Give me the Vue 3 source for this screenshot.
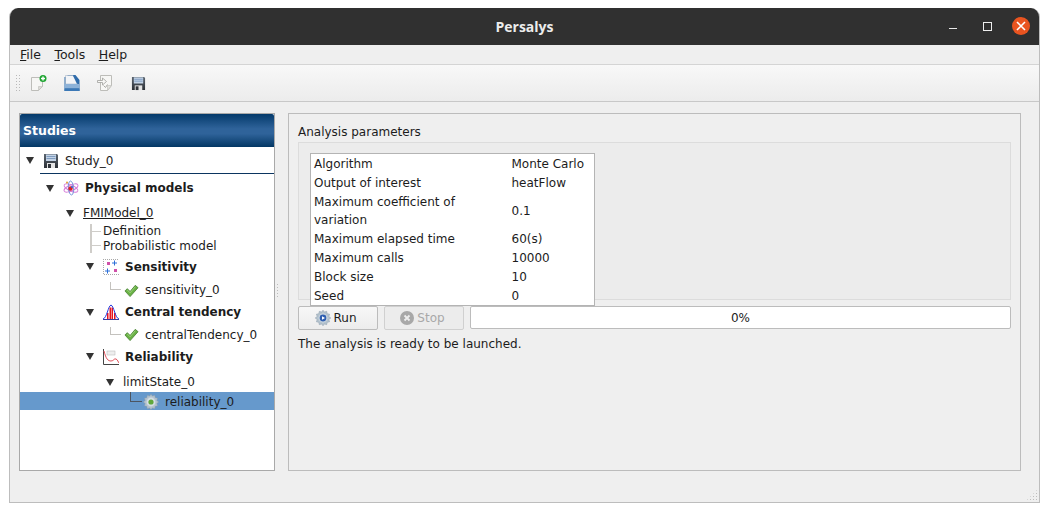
<template>
  <div class="page">
    <svg class="defs" width="0" height="0">
      <defs>
        <linearGradient id="floppyBody" x1="0" y1="0" x2="0" y2="1">
          <stop offset="0" stop-color="#5b6570" />
          <stop offset="1" stop-color="#2c3036" />
        </linearGradient>
        <symbol id="i-save" viewBox="0 0 16 16">
          <path d="M1 1h13l1 1v13H1z" fill="url(#floppyBody)" />
          <rect x="3" y="1.500" width="10" height="6.500" fill="#c3d3e6" />
          <path d="M3.500 3.500h9M3.500 5.500h9" stroke="#7f9cc0" stroke-width="1" />
          <rect x="4" y="10" width="8" height="5" fill="#e4e4e4" />
          <rect x="5" y="11" width="3" height="4" fill="#30343a" />
        </symbol>
        <symbol id="i-check" viewBox="0 0 16 16">
          <path d="M1 8.500l2.500-2.500 3 3 5.500-6.500 3 2.500-8.500 9.500z" fill="#6ab245" stroke="#3f7a2a" stroke-width=".8" />
          <path d="M3.500 7.500l3 3 5.500-6.500" fill="none" stroke="#a5d88a" stroke-width=".8" />
        </symbol>
        <symbol id="i-gear" viewBox="0 0 16 16">
          <path d="M8 .2l1.400 1.900 2.300-.8.500 2.400 2.400.5-.8 2.300L15.800 8l-2 1.500.8 2.300-2.400.5-.5 2.400-2.300-.8L8 15.800l-1.400-1.900-2.300.8-.5-2.400-2.400-.5.8-2.300L.2 8l2-1.500-.8-2.300 2.400-.5.5-2.400 2.300.8z" fill="#b4c3ce" stroke="#8a9baa" stroke-width=".5" />
          <circle cx="8" cy="8" r="4.400" fill="#d5dee4" />
        </symbol>
      </defs>
    </svg>

    <div class="window">
      <header class="titlebar">
        <span class="title">Persalys</span>
        <div class="wm">
          <span class="wm-min"></span>
          <span class="wm-max"></span>
          <span class="wm-close">
            <svg width="12" height="12" viewBox="0 0 12 12"><path d="M2 2l8 8M10 2l-8 8" stroke="#fff" stroke-width="1.600" /></svg>
          </span>
        </div>
      </header>

      <nav class="menubar">
        <span><u>F</u>ile</span>
        <span><u>T</u>ools</span>
        <span><u>H</u>elp</span>
      </nav>

      <div class="toolbar">
        <span class="grip"></span>
        <svg class="tool" viewBox="0 0 16 16">
          <path d="M.5 2.500h11v9l-4 4h-7z" fill="#f6f6f4" stroke="#bdbdb9" />
          <path d="M7.500 15.500v-4h4z" fill="#dcdcd8" stroke="#bdbdb9" stroke-width=".6" />
          <circle cx="12" cy="3.500" r="3.500" fill="#1fa532" />
          <path d="M12 1.500v4M10 3.500h4" stroke="#fff" stroke-width="1.400" />
        </svg>
        <svg class="tool" viewBox="0 0 16 16">
          <path d="M.5 16V2h3V0h8l4 5v11z" fill="#2f6cab" />
          <path d="M1.500 9V.5h7.500L13.500 7v2z" fill="#f2f4f7" stroke="#9aaabc" stroke-width=".5" />
          <path d="M9 .5l6 4.500v3l-2 1z" fill="#2f6cab" />
          <path d="M.5 9h15v4.500H.5z" fill="#8db2d8" />
          <path d="M.5 13.500h15V16H.5z" fill="#3b78b6" />
        </svg>
        <svg class="tool" viewBox="0 0 16 16">
          <path d="M3.500 .5h11v10l-4 5h-7z" fill="#f7f7f5" stroke="#bdbdb9" />
          <path d="M10.500 15.500v-5h4z" fill="#e2e2de" stroke="#bdbdb9" stroke-width=".6" />
          <path d="M.5 5.500h5V3l4 3.500-4 3.500V7.500h-5z" fill="#f7f7f5" stroke="#a0a09c" stroke-width=".8" />
          <path d="M6.500 10.500l2 2 2-3" fill="none" stroke="#a9a9a5" />
        </svg>
        <svg class="tool tool-save" viewBox="0 0 16 16"><use href="#i-save" /></svg>
      </div>

      <main class="content">
        <aside class="studies">
          <div class="studies-head">Studies</div>
          <div class="tree">
            <div
              v-for="row in rows"
              :key="row.label"
              class="row"
              :class="{ selected: row.selected, 'row-study': row.study }"
              :style="{ height: row.h + 'px', paddingLeft: row.x + 'px', paddingTop: (row.pt || 0) + 'px' }"
            >
              <span v-if="row.arrow" class="arrow"></span>

              <span v-if="row.leaf" class="branch"><i></i></span>
              <span v-if="row.corner" class="corner" :class="{ 'corner-sel': row.selected }"></span>

              <svg v-if="row.icon === 'save'" class="ico" viewBox="0 0 16 16"><use href="#i-save" /></svg>
              <svg v-else-if="row.icon === 'atom'" class="ico" viewBox="0 0 16 16">
                <g fill="none" stroke-width=".9">
                  <ellipse cx="8" cy="8" rx="7.500" ry="3" stroke="#d57ad8" transform="rotate(25 8 8)" />
                  <ellipse cx="8" cy="8" rx="7.500" ry="3" stroke="#d57ad8" transform="rotate(-25 8 8)" />
                  <ellipse cx="8" cy="8" rx="7" ry="2.600" stroke="#6c8fd8" transform="rotate(85 8 8)" />
                </g>
                <circle cx="7.500" cy="8.500" r="2.200" fill="#d8232a" />
                <circle cx="9" cy="7" r="1.100" fill="#3a5fcd" />
                <circle cx="4" cy="2.500" r="1" fill="#e0a030" />
              </svg>
              <svg v-else-if="row.icon === 'sens'" class="ico" viewBox="0 0 16 16">
                <path d="M.5 0v15.500H16" fill="none" stroke="#a8a8a8" stroke-dasharray="1 1" />
                <path d="M2 .5h14" stroke="#a8a8a8" stroke-dasharray="1 1" />
                <path d="M4 3h3v3H4zM11 10h3v3h-3z" fill="#c8329a" opacity=".85" />
                <path d="M11.500 1.500v5M9 4h5M4.500 9.500v5M2 12h5" stroke="#2a6fd8" stroke-width="1" />
              </svg>
              <svg v-else-if="row.icon === 'central'" class="ico" viewBox="0 0 16 16">
                <path d="M4 15V9h1.500v6zM6.500 15V3.500H8V15zM8.500 15V3.500H10V15zM11 15V9h1.500v6z" fill="#e8131f" />
                <path d="M0 15.500h16" stroke="#3a3a9a" />
                <path d="M0 15C4 14 5 2 8 1c3 1 4 13 8 14" fill="none" stroke="#2038e0" stroke-width="1" />
              </svg>
              <svg v-else-if="row.icon === 'rel'" class="ico" viewBox="0 0 16 16">
                <path d="M.5 0v15.500H16" fill="none" stroke="#444" />
                <path d="M1 2C3 10 5 12 8 12s3-3 5-2 2 3 3 4" fill="none" stroke="#e0505a" />
                <rect x="4" y="2" width="8" height="4" fill="#eee" stroke="#b5b5b5" stroke-width=".5" />
              </svg>
              <svg v-else-if="row.icon === 'check'" class="ico ico-check" viewBox="0 0 16 16"><use href="#i-check" /></svg>
              <svg v-else-if="row.icon === 'gear'" class="ico" viewBox="0 0 16 16">
                <use href="#i-gear" />
                <circle cx="8" cy="8" r="2.600" fill="#5fa83c" />
              </svg>

              <span class="label" :class="{ bold: row.bold, under: row.under }">{{ row.label }}</span>
            </div>
          </div>
        </aside>

        <div class="splitter"></div>

        <section class="panel">
          <div class="panel-title">Analysis parameters</div>
          <div class="group">
            <table class="params">
              <tbody>
                <tr v-for="p in params" :key="p[0]">
                  <td class="k">{{ p[0] }}</td>
                  <td class="v">{{ p[1] }}</td>
                </tr>
              </tbody>
            </table>
          </div>
          <div class="actions">
            <button class="btn">
              <svg class="btn-ico" viewBox="0 0 16 16">
                <use href="#i-gear" />
                <circle cx="8" cy="8" r="3.400" fill="#2f5fb0" />
                <path d="M7 6.200l3 1.800-3 1.800z" fill="#fff" />
              </svg>
              Run
            </button>
            <button class="btn btn-off">
              <svg class="btn-ico" viewBox="0 0 16 16">
                <circle cx="8" cy="8" r="7" fill="#a8a8a8" />
                <path d="M5.500 5.500l5 5M10.500 5.500l-5 5" stroke="#eee" stroke-width="1.800" />
              </svg>
              Stop
            </button>
            <div class="progress">0%</div>
          </div>
          <p class="status">The analysis is ready to be launched.</p>
        </section>
      </main>
      <span class="resize"></span>
    </div>
  </div>
</template>

<script setup>
const rows = [
  { label: 'Study_0', x: 6, h: 27, arrow: true, icon: 'save', study: true },
  { label: 'Physical models', x: 26, h: 28, arrow: true, icon: 'atom', bold: true },
  { label: 'FMIModel_0', x: 46, h: 22, arrow: true, under: true },
  { label: 'Definition', x: 70, h: 14, leaf: true },
  { label: 'Probabilistic model', x: 70, h: 15, leaf: true },
  { label: 'Sensitivity', x: 66, h: 27, arrow: true, icon: 'sens', bold: true },
  { label: 'sensitivity_0', x: 90, h: 20, corner: true, icon: 'check' },
  { label: 'Central tendency', x: 66, h: 24, arrow: true, icon: 'central', bold: true },
  { label: 'centralTendency_0', x: 90, h: 21, corner: true, icon: 'check' },
  { label: 'Reliability', x: 66, h: 23, arrow: true, icon: 'rel', bold: true },
  { label: 'limitState_0', x: 86, h: 24, pt: 4, arrow: true },
  { label: 'reliability_0', x: 110, h: 18, pt: 2, corner: true, icon: 'gear', selected: true }
]

const params = [
  ['Algorithm', 'Monte Carlo'],
  ['Output of interest', 'heatFlow'],
  ['Maximum coefficient of variation', '0.1'],
  ['Maximum elapsed time', '60(s)'],
  ['Maximum calls', '10000'],
  ['Block size', '10'],
  ['Seed', '0']
]
</script>

<style>
html,
body {
  margin: 0;
  background: #fff;
}
</style>

<style scoped>
.page {
  width: 1049px;
  height: 512px;
  box-sizing: border-box;
  padding: 8px 9px 9px;
  overflow: hidden;
  font-family: "DejaVu Sans", sans-serif;
  font-size: 12px;
  color: #1c1c1c;
}

.defs {
  position: absolute;
}

.window {
  position: relative;
  height: 495px;
  box-sizing: border-box;
  display: flex;
  flex-direction: column;
  background: #efefef;
  border: 1px solid #bdbdbd;
  border-top: none;
  border-radius: 9px 9px 0 0;
  overflow: hidden;
}

/* title bar */
.titlebar {
  height: 37px;
  flex-shrink: 0;
  background: #303030;
  display: flex;
  align-items: center;
  justify-content: center;
  position: relative;
}

.title {
  color: #ececec;
  font-family: "Open Sans", sans-serif;
  font-weight: 700;
  font-size: 14px;
}

.wm {
  position: absolute;
  right: 9px;
  top: 9px;
  display: flex;
  align-items: center;
  gap: 20px;
}

.wm-min {
  width: 8px;
  height: 1px;
  background: #e8e8e8;
  margin-top: 4px;
  margin-right: 6px;
}

.wm-max {
  width: 7px;
  height: 7px;
  border: 1px solid #eee;
}

.wm-close {
  width: 18px;
  height: 18px;
  border-radius: 50%;
  background: #e95420;
  display: flex;
  align-items: center;
  justify-content: center;
}

/* menu bar */
.menubar {
  height: 19px;
  flex-shrink: 0;
  display: flex;
  align-items: center;
  gap: 13.5px;
  padding-left: 10px;
  border-bottom: 1px solid #d4d4d4;
  font-size: 12.5px;
}

/* toolbar */
.toolbar {
  height: 37px;
  flex-shrink: 0;
  box-sizing: border-box;
  display: flex;
  align-items: center;
  padding-left: 5px;
  background: linear-gradient(#f8f8f8, #ececec);
  border-bottom: 1px solid #c8c8c8;
}

.grip {
  width: 5px;
  height: 18px;
  margin-right: 11px;
  background-image: radial-gradient(circle, #b9b9b9 0.7px, transparent 0.8px);
  background-size: 3px 3px;
}

.tool {
  width: 16px;
  height: 16px;
  margin-right: 17px;
}

.tool-save {
  margin-left: 1px;
  width: 15px;
  height: 15px;
}

/* main area */
.content {
  flex: 1;
  display: flex;
  padding: 11px 18px 31px 9px;
  min-height: 0;
}

.studies {
  width: 256px;
  box-sizing: border-box;
  background: #fff;
  border: 1px solid #a9a9a9;
  display: flex;
  flex-direction: column;
  flex-shrink: 0;
}

.studies-head {
  height: 33px;
  flex-shrink: 0;
  box-sizing: border-box;
  padding-left: 3px;
  display: flex;
  align-items: center;
  color: #fff;
  font-weight: 700;
  font-size: 12.5px;
  background: linear-gradient(#043a6b, #2f639a 45%, #2f639a 60%, #033764);
  border-radius: 2px 2px 0 0;
}

.row {
  display: flex;
  align-items: center;
  box-sizing: border-box;
  white-space: nowrap;
}

.row-study {
  position: relative;
}

.row-study::after {
  content: "";
  position: absolute;
  left: 20px;
  right: 0;
  bottom: 0;
  height: 1px;
  background: #0b3560;
}

.selected {
  background: #6699cc;
}

.arrow {
  width: 0;
  height: 0;
  border-left: 4px solid transparent;
  border-right: 4px solid transparent;
  border-top: 7px solid #333;
  margin-right: 9px;
}

.ico {
  width: 16px;
  height: 16px;
  margin-right: 6px;
  flex-shrink: 0;
}

.ico-check {
  width: 15px;
  height: 15px;
}

.branch {
  width: 13px;
  height: 100%;
  box-sizing: border-box;
  border-left: 2px solid #cfcdc9;
  display: flex;
  align-items: center;
}

.branch i {
  display: block;
  width: 9px;
  height: 1px;
  background: #cfcdc9;
}

.corner {
  width: 11px;
  height: 8px;
  box-sizing: border-box;
  margin-right: 3px;
  margin-bottom: 8px;
  border-left: 1px solid #c4c2be;
  border-bottom: 1px solid #c4c2be;
}

.corner-sel {
  width: 12px;
  height: 10px;
  margin-right: 1px;
  margin-bottom: 10px;
  border-color: #4c5561;
}

.bold {
  font-weight: 700;
}

.under {
  text-decoration: underline;
}

.splitter {
  width: 13px;
  flex-shrink: 0;
  background-image: radial-gradient(circle, #bcbcbc 0.7px, transparent 0.8px);
  background-repeat: repeat-y;
  background-size: 5px 3px;
  background-position: 0 0;
  margin: 170px 0 174px;
}

.panel {
  flex: 1;
  min-width: 0;
  box-sizing: border-box;
  border: 1px solid #bcbcbc;
  padding: 9px 9px 0;
}

.panel-title {
  height: 19px;
  line-height: 18px;
}

.group {
  height: 158px;
  box-sizing: border-box;
  padding: 10px 11px;
  background: #ececec;
  border: 1px solid #dcdcdc;
}

.params {
  border-collapse: collapse;
  background: #fff;
  border: 1px solid #b4b4b4;
  width: 285px;
}

.params td {
  padding: 1px 3px 0;
  height: 19px;
  box-sizing: border-box;
  line-height: 18px;
}

.k {
  width: 198px;
}

.actions {
  display: flex;
  gap: 6px;
  margin-top: 6px;
}

.btn {
  width: 80px;
  height: 24px;
  display: flex;
  align-items: center;
  justify-content: center;
  gap: 2px;
  padding: 0 4px 0 0;
  font: inherit;
  color: #1c1c1c;
  background: linear-gradient(#f7f7f7, #ececec);
  border: 1px solid #bcbcbc;
  border-radius: 2px;
}

.btn-off {
  color: #a8a8a8;
  background: #ececec;
  border-color: #d0d0d0;
}

.btn-ico {
  width: 16px;
  height: 16px;
}

.progress {
  flex: 1;
  height: 23px;
  box-sizing: border-box;
  background: #fff;
  border: 1px solid #bcbcbc;
  border-radius: 2px;
  display: flex;
  align-items: center;
  justify-content: center;
}

.status {
  margin: 7px 0 0;
  line-height: 15px;
}

.resize {
  position: absolute;
  right: 1px;
  bottom: 1px;
  width: 12px;
  height: 12px;
  background-image: radial-gradient(circle, #bdbdbd 0.8px, transparent 0.9px);
  background-size: 3px 3px;
  clip-path: polygon(100% 0, 100% 100%, 0 100%);
}
</style>
